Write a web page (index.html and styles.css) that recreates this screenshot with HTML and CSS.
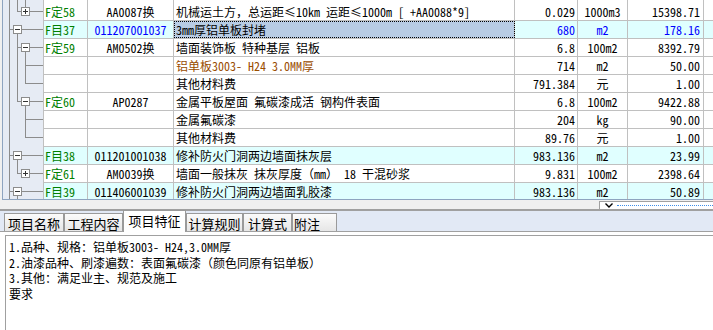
FILE: index.html
```html
<!DOCTYPE html>
<html lang="zh-CN">
<head>
<meta charset="utf-8">
<title>清单</title>
<link rel="stylesheet" href="styles.css">
</head>
<body>
<div class="app">
  <div class="grid">
    <div class="tree">
      <svg class="tree-svg" width="40" height="199" viewBox="3 0 40 199">
        <g class="ln">
          <path d="M9.5 0V199"/>
          <path d="M9 29.5H13M9 155.5H13M9 191.5H13"/>
          <path d="M22 29.5H43M22 155.5H43M22 191.5H43"/>
          <path d="M17.5 0V11.5M17.5 33V101.5M17.5 159V173.5M17.5 195V199"/>
          <path d="M17.5 11.5H21M17.5 47.5H21M17.5 101.5H21M17.5 173.5H21"/>
          <path d="M30 11.5H43M30 47.5H43M30 101.5H43M30 173.5H43"/>
          <path d="M25.5 0V7M25.5 51V83.5M25.5 105V137.5"/>
          <path d="M25.5 65.5H43M25.5 83.5H43M25.5 119.5H43M25.5 137.5H43"/>
        </g>
        <g class="box">
          <rect x="13.5" y="25.5" width="8" height="8"/>
          <rect x="13.5" y="151.5" width="8" height="8"/>
          <rect x="13.5" y="187.5" width="8" height="8"/>
          <rect x="21.5" y="7.5" width="8" height="8"/>
          <rect x="21.5" y="43.5" width="8" height="8"/>
          <rect x="21.5" y="97.5" width="8" height="8"/>
          <rect x="21.5" y="169.5" width="8" height="8"/>
        </g>
        <g class="sign">
          <path d="M15 29.5H20M15 155.5H20M15 191.5H20"/>
          <path d="M23 11.5H28M25.5 9V14"/>
          <path d="M23 47.5H28M23 101.5H28"/>
          <path d="M23 173.5H28M25.5 171V176"/>
        </g>
      </svg>
    </div>
    <div class="rows">
      <div class="row first">
        <div class="c a">F定58</div><div class="c b">AA0087换</div><div class="c d">机械运土方，总运距≤10km 运距≤1000m [ +AA0088*9]</div><div class="c q">0.029</div><div class="c u">1000m3</div><div class="c p">15398.71</div><div class="c g"></div>
      </div>
      <div class="row cyan sel">
        <div class="c a">F目37</div><div class="c b">011207001037</div><div class="c d focus">3mm厚铝单板封堵</div><div class="c q">680</div><div class="c u">m2</div><div class="c p">178.16</div><div class="c g"></div>
      </div>
      <div class="row">
        <div class="c a">F定59</div><div class="c b">AM0502换</div><div class="c d">墙面装饰板 特种基层 铝板</div><div class="c q">6.8</div><div class="c u">100m2</div><div class="c p">8392.79</div><div class="c g"></div>
      </div>
      <div class="row">
        <div class="c a"></div><div class="c b"></div><div class="c d brown">铝单板3003- H24 3.0MM厚</div><div class="c q">714</div><div class="c u">m2</div><div class="c p">50.00</div><div class="c g"></div>
      </div>
      <div class="row">
        <div class="c a"></div><div class="c b"></div><div class="c d">其他材料费</div><div class="c q">791.384</div><div class="c u">元</div><div class="c p">1.00</div><div class="c g"></div>
      </div>
      <div class="row">
        <div class="c a">F定60</div><div class="c b">AP0287</div><div class="c d">金属平板屋面 氟碳漆成活 钢构件表面</div><div class="c q">6.8</div><div class="c u">100m2</div><div class="c p">9422.88</div><div class="c g"></div>
      </div>
      <div class="row">
        <div class="c a"></div><div class="c b"></div><div class="c d">金属氟碳漆</div><div class="c q">204</div><div class="c u">kg</div><div class="c p">90.00</div><div class="c g"></div>
      </div>
      <div class="row">
        <div class="c a"></div><div class="c b"></div><div class="c d">其他材料费</div><div class="c q">89.76</div><div class="c u">元</div><div class="c p">1.00</div><div class="c g"></div>
      </div>
      <div class="row cyan">
        <div class="c a">F目38</div><div class="c b">011201001038</div><div class="c d">修补防火门洞两边墙面抹灰层</div><div class="c q">983.136</div><div class="c u">m2</div><div class="c p">23.99</div><div class="c g"></div>
      </div>
      <div class="row">
        <div class="c a">F定61</div><div class="c b">AM0039换</div><div class="c d">墙面一般抹灰 抹灰厚度（mm） 18 干混砂浆</div><div class="c q">9.831</div><div class="c u">100m2</div><div class="c p">2398.64</div><div class="c g"></div>
      </div>
      <div class="row cyan">
        <div class="c a">F目39</div><div class="c b">011406001039</div><div class="c d">修补防火门洞两边墙面乳胶漆</div><div class="c q">983.136</div><div class="c u">m2</div><div class="c p">50.89</div><div class="c g"></div>
      </div>
    </div>
  </div>
  <div class="split">
    <div class="handle">
      <svg class="chev" width="8" height="5" viewBox="0 0 8 5"><path d="M0.5 0.5L4 4L7.5 0.5" fill="none" stroke="#000" stroke-width="1.4"/></svg>
      <span class="dots"></span>
    </div>
  </div>
  <div class="tabbar">
    <div class="tab">项目名称</div>
    <div class="tab t2">工程内容</div>
    <div class="tab active">项目特征</div>
    <div class="tab t4">计算规则</div>
    <div class="tab t5">计算式</div>
    <div class="tab t6">附注</div>
  </div>
  <div class="panel">
    <div class="content">
      <div>1.品种、规格：铝单板3003- H24,3.0MM厚</div>
      <div>2.油漆品种、刷漆遍数：表面氟碳漆（颜色同原有铝单板）</div>
      <div>3.其他：满足业主、规范及施工</div>
      <div>要求</div>
    </div>
  </div>
</div>
</body>
</html>
```
FILE: styles.css
```css
* { box-sizing: border-box; }
html, body { margin: 0; padding: 0; }
body {
  width: 713px;
  height: 330px;
  overflow: hidden;
  background: #f0f0f0;
  font-family: "Noto Sans Mono CJK SC", "Noto Sans CJK SC", monospace;
  font-size: 12px;
  color: #000;
}
.app {
  width: 713px;
  height: 330px;
  display: flex;
  flex-direction: column;
  overflow: hidden;
}
.grid {
  flex: none;
  display: flex;
  height: 200px;
  margin-left: 2px;
  border-left: 1px solid #8ea4c0;
  border-bottom: 1px solid #8ea4c0;
  overflow: hidden;
  background: #fff;
}
.tree {
  flex: none;
  width: 41px;
  background: #e6ebf4;
  border-right: 1px solid #c0c0c0;
}
.tree-svg { display: block; }
.tree-svg .ln path { stroke: #8c8c8c; stroke-width: 1; fill: none; shape-rendering: crispEdges; }
.tree-svg .box rect { fill: #fff; stroke: #8c8c8c; stroke-width: 1; shape-rendering: crispEdges; }
.tree-svg .sign path { stroke: #333; stroke-width: 1; fill: none; shape-rendering: crispEdges; }
.rows {
  flex: none;
  width: 700px;
}
.row {
  display: grid;
  grid-template-columns: 44px 86px 341px 63px 50px 76px 40px;
  height: 18px;
  border-bottom: 1px solid #c0c0c0;
  background: #fff;
}
.row.first { height: 21px; }
.row.first .c { padding-top: 3px; }
.row.cyan { background: #e0ffff; }
.c {
  border-right: 1px solid #c0c0c0;
  line-height: 17px;
  white-space: nowrap;
  overflow: hidden;
  padding: 0 2px;
}
.a { color: #008000; padding-left: 1px; }
.b { text-align: center; padding: 0; }
.d { text-align: left; }
.q { text-align: right; }
.u { text-align: center; padding: 0; }
.p { text-align: right; padding-right: 3px; }
.brown { color: #994c00; }
.sel .b, .sel .q, .sel .u, .sel .p { color: #0000ff; }
.focus {
  background: #b8cce4;
  outline: 1px dotted #000;
  outline-offset: -1px;
}
.split {
  flex: none;
  height: 9px;
  display: flex;
  justify-content: flex-end;
}
.handle {
  width: 114px;
  height: 8px;
  margin-top: 1px;
  background: #fff;
  border-top: 1px solid #a0a0a0;
  border-left: 1px solid #a0a0a0;
  display: flex;
  align-items: center;
  padding-left: 5px;
}
.chev { display: block; flex: none; }
.dots {
  flex: 1;
  margin-left: 4px;
  border-top: 1px dotted #3d8ee8;
}
.tabbar {
  flex: none;
  height: 23px;
  background: #e2e9f5;
  border-top: 2px solid #a0a0a0;
  border-bottom: 1px solid #a0a0a0;
  display: flex;
  align-items: flex-end;
  padding-left: 4px;
  font-size: 13px;
}
.tab {
  flex: none;
  width: 60px;
  height: 18px;
  line-height: 16px;
  padding-top: 2px;
  text-align: center;
  border: 1px solid #9a9a9a;
  border-bottom: none;
  background: linear-gradient(#fbfbfb, #e6e6e6);
  white-space: nowrap;
}
.t2 { width: 59px; }
.t4 { width: 57px; }
.t5 { width: 49px; }
.t6 { width: 45px; text-align: left; padding-left: 1px; }
.tab.active {
  width: 63px;
  height: 22px;
  margin-bottom: -1px;
  background: #fff;
  padding-top: 2px;
}
.panel {
  flex: 1;
  background: #fff;
  padding: 3px 0 0 5px;
  display: flex;
}
.content {
  flex: 1;
  border-top: 1px solid #a0a0a0;
  border-left: 1px solid #a0a0a0;
  padding: 3px 3px;
  line-height: 15.67px;
  font-size: 12px;
}
```
